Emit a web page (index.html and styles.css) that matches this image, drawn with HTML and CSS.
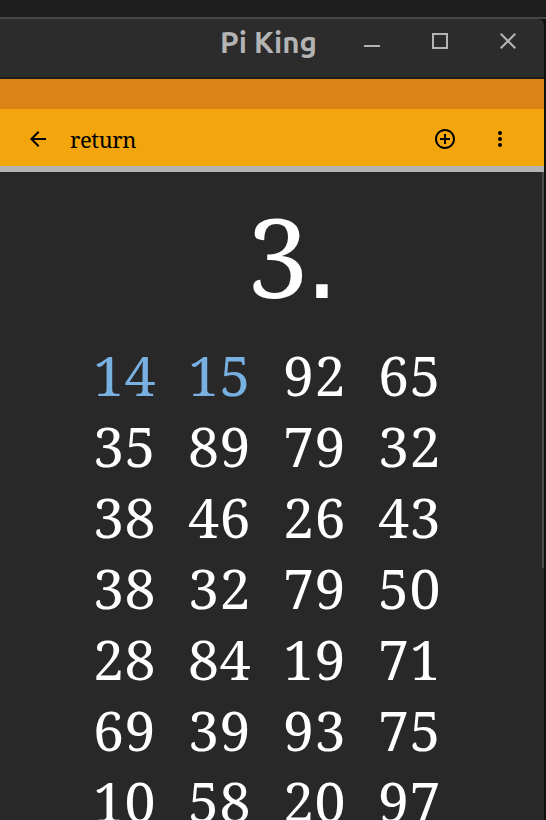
FILE: index.html
```
<!DOCTYPE html>
<html lang="en">
<head>
<meta charset="utf-8">
<title>Pi King</title>
<link rel="stylesheet" href="styles.css">
</head>
<body>
<div class="desktop"></div>
<div class="window">
  <header class="titlebar">
    <span class="title">Pi King</span>
    <svg class="min" width="16" height="16" viewBox="0 0 16 16"><path d="M0 13H16"/></svg>
    <svg class="max" width="16" height="16" viewBox="0 0 16 16"><path d="M1 1H15V15H1Z"/></svg>
    <svg class="close" width="16" height="16" viewBox="0 0 16 16"><path d="M.7.7 15.3 15.3M15.3.7.7 15.3"/></svg>
  </header>
  <div class="statusbar"></div>
  <nav class="toolbar">
    <svg class="back" width="24" height="24" viewBox="0 0 24 24"><path d="M20 11H7.83l5.59-5.59L12 4l-8 8 8 8 1.41-1.41L7.83 13H20v-2z"/></svg>
    <span class="label">return</span>
    <svg class="add" width="24" height="24" viewBox="0 0 24 24"><path d="M13 7h-2v4H7v2h4v4h2v-4h4v-2h-4V7zm-1-5C6.48 2 2 6.48 2 12s4.480 10 10 10 10-4.480 10-10S17.520 2 12 2zm0 18c-4.410 0-8-3.590-8-8s3.590-8 8-8 8 3.590 8 8-3.590 8-8 8z"/></svg>
    <svg class="more" width="24" height="24" viewBox="0 0 24 24"><circle cx="12" cy="6" r="2"/><circle cx="12" cy="12" r="2"/><circle cx="12" cy="18" r="2"/></svg>
  </nav>
  <main class="content">
    <div class="lead">3<span class="point">.</span></div>
    <div class="digits">
      <span class="known">14</span><span class="known">15</span><span>92</span><span>65</span>
      <span>35</span><span>89</span><span>79</span><span>32</span>
      <span>38</span><span>46</span><span>26</span><span>43</span>
      <span>38</span><span>32</span><span>79</span><span>50</span>
      <span>28</span><span>84</span><span>19</span><span>71</span>
      <span>69</span><span>39</span><span>93</span><span>75</span>
      <span>10</span><span>58</span><span>20</span><span>97</span>
    </div>
    <div class="scrollbar"></div>
  </main>
</div>
</body>
</html>
```
FILE: styles.css
```
* { box-sizing: border-box; }
body { margin: 0; width: 546px; height: 820px; overflow: hidden; background: #111; font-family: "Noto Serif", serif; }
.desktop { height: 19px; background: #1e1e1e; border-bottom: 2px solid #464646; }
.window { width: 544px; height: 801px; overflow: hidden; display: flex; flex-direction: column; }
.titlebar { height: 60px; flex: none; display: flex; align-items: flex-start; background: #2c2c2c; border-bottom: 2px solid #1c1c1c; border-top-right-radius: 6px; padding-left: 220px; color: #b4b4b4; }
.titlebar svg { fill: none; stroke: #b4b4b4; stroke-width: 2; margin-top: 14px; }
.title { font: bold 29.6px/34px Ubuntu, sans-serif; width: 144px; margin-top: 6px; }
.max, .close { margin-left: 52px; }
.statusbar { height: 30px; flex: none; background: #da8317; }
.toolbar { height: 63px; flex: none; display: flex; align-items: flex-start; padding: 18px 32px 0 26px; background: #f2a50c; border-bottom: 6px solid #b3b3b3; }
.label { margin: -3px auto 0 20px; font-size: 22px; line-height: 30px; letter-spacing: -0.4px; }
.more { margin-left: 31px; }
.content { flex: 1; min-height: 0; position: relative; overflow: hidden; background: #282828; color: #fff; }
.lead { height: 167px; line-height: 166px; padding-left: 247px; font-size: 110px; white-space: nowrap; }
.point { font-family: "DejaVu Sans", sans-serif; line-height: 0; margin-left: -4px; }
.digits { display: grid; grid-template-columns: repeat(4, 95px); grid-auto-rows: 71px; padding-left: 93px; font-size: 55.5px; line-height: 71px; letter-spacing: 0.6px; }
.known { color: #78b0e1; }
.scrollbar { position: absolute; top: 0; right: 0; width: 2px; height: 396px; background: #4a4a4a; }
```
